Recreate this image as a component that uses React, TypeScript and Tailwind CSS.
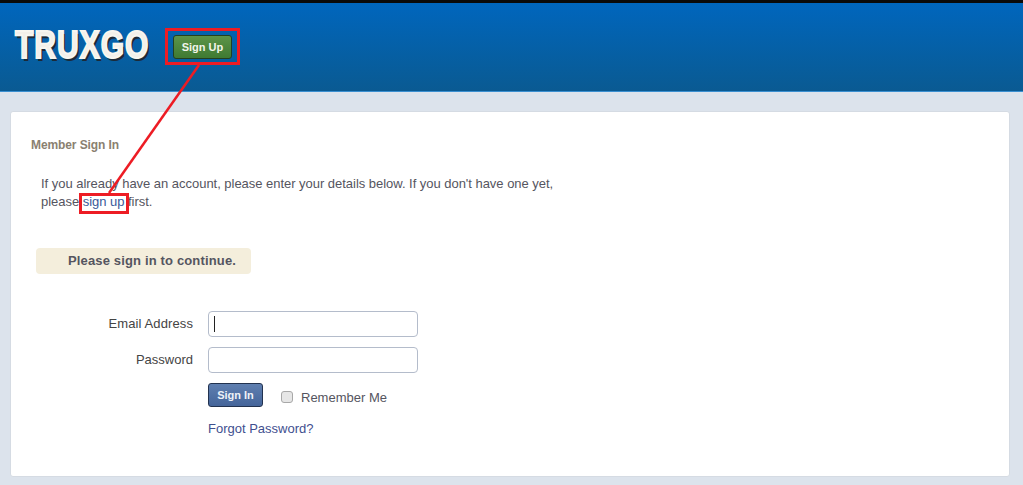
export default function App() {
  return (
    <div className="relative h-[485px] w-[1023px] overflow-hidden bg-[#dce3ec] font-['Liberation_Sans',Arial,sans-serif] text-[13px] text-[#555]">
      <header className="flex h-[92px] items-start border-b border-[#3a8fd0] border-t-[3px] border-t-[#0a0a0a] bg-gradient-to-b from-[#0066bd] to-[#0a5a92] pl-[15px]">
        <div className="mt-[21px] w-[136px] origin-center scale-y-[1.3] text-[30px] leading-[42px] font-bold tracking-[1px] text-[#f3f0ea] [-webkit-text-stroke:1.5px_#f8f6f0] [text-shadow:2px_2px_0_#1c2a38]">
          TRUXGO
        </div>
        <button className="mt-[32px] ml-[22px] h-[24px] w-[59px] rounded-[3px] border border-[#24401f] bg-gradient-to-b from-[#5c9448] to-[#3f7a32] text-[11px] font-bold text-[#f2f5ea]">
          Sign Up
        </button>
      </header>

      <main className="mx-[10px] mt-[19px] h-[366px] w-[1000px] rounded-[3px] border border-[#d5dbe3] bg-white pt-[25px] pl-[20px]">
        <h2 className="text-[12px] leading-[16px] font-bold tracking-[-0.1px] text-[#8a8070]">Member Sign In</h2>
        <p className="mt-[22px] ml-[10px] w-[530px] text-[13px] leading-[18px] tracking-[-0.03px] text-[#555560]">
          If you already have an account, please enter your details below. If you don't have one yet,
          <br />
          please <a className="text-[#3a5a9a]">sign up</a> first.
        </p>
        <div className="mt-[37px] ml-[5px] flex h-[26px] w-[215px] items-center rounded-[4px] bg-[#f4eedc] pl-[32px] text-[13px] font-bold tracking-[0.15px] text-[#555560]">
          Please sign in to continue.
        </div>

        <div className="mt-[37px] flex items-center">
          <label className="w-[162px] text-right text-[13px] tracking-[0.1px] text-[#444]">Email Address</label>
          <div className="ml-[15px] flex h-[26px] w-[210px] items-center rounded-[4px] border border-[#b4bccb] bg-white pl-[5px]">
            <span className="h-[16px] w-px bg-[#222]" />
          </div>
        </div>
        <div className="mt-[10px] flex items-center">
          <label className="w-[162px] text-right text-[13px] text-[#444]">Password</label>
          <div className="ml-[15px] h-[26px] w-[210px] rounded-[4px] border border-[#b4bccb] bg-white" />
        </div>
        <div className="mt-[10px] ml-[177px] flex items-start">
          <button className="h-[24px] w-[55px] rounded-[3px] border border-[#22324f] bg-gradient-to-b from-[#5f7fb0] to-[#45659a] text-[11px] font-bold text-[#eef2f8]">
            Sign In
          </button>
          <span className="mt-[8px] ml-[18px] h-[12px] w-[12px] rounded-[3px] border border-[#a8a8a8] bg-[#e6e6e6]" />
          <span className="mt-[7px] ml-[8px] text-[13px] leading-[16px] text-[#555560]">Remember Me</span>
        </div>
        <a className="mt-[14px] ml-[177px] block text-[13px] leading-[16px] text-[#3f4f8f]">Forgot Password?</a>
      </main>

      <div className="absolute top-[28px] left-[165px] h-[37px] w-[75px] border-[3px] border-[#ed1c24]" />
      <div className="absolute top-[193px] left-[79px] h-[21px] w-[50px] border-[3px] border-[#ed1c24]" />
      <svg className="absolute top-0 left-0" width="1023" height="485">
        <line x1="199" y1="65" x2="109" y2="193" stroke="#ed1c24" strokeWidth="2.5" />
      </svg>
    </div>
  );
}
